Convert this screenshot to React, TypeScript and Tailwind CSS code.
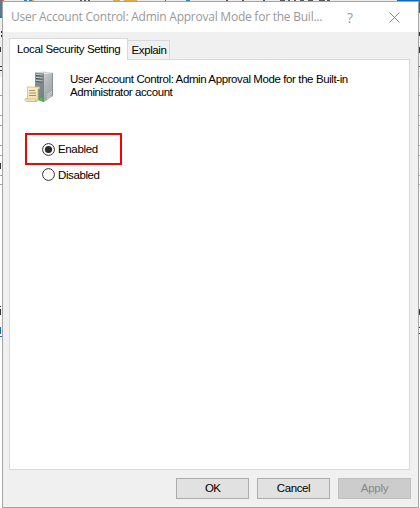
import React from "react";

function Backdrop() {
  return (
    <svg className="absolute inset-0" width="420" height="508" shapeRendering="crispEdges">
      <rect width="420" height="508" fill="#fff" />
      <rect width="420" height="2" fill="#ececec" />
      <rect width="2" height="18" fill="#5e7891" />
      <rect x="2" width="2" height="1" fill="#e2552c" />
      <rect y="16" width="2" height="2" fill="#2f73b8" />
      <g fill="#2f7ec6">
        <rect x="24" width="3" height="1" />
        <rect x="29" width="3" height="1" />
        <rect x="186" width="4" height="1" />
        <rect x="397" width="23" height="13" fill="#0a6cc0" />
      </g>
      <g fill="#e0a850">
        <rect x="113" width="7" height="1" />
        <rect x="124" width="13" height="1" />
        <rect x="32" width="2" height="1" />
      </g>
      <g fill="#555">
        <rect x="80" width="2" height="1" />
        <rect x="84" width="2" height="1" />
        <rect x="88" width="2" height="1" />
        <rect x="165" width="1" height="1" />
        <rect x="226" width="2" height="1" />
        <rect x="242" width="2" height="1" />
        <rect x="263" width="2" height="1" />
        <rect x="280" width="5" height="1" />
        <rect x="288" width="2" height="1" />
        <rect x="294" width="2" height="1" />
        <rect x="300" width="4" height="1" />
        <rect x="308" width="5" height="1" />
        <rect x="319" width="6" height="1" />
        <rect x="327" width="3" height="1" />
      </g>
      {[95, 115, 125, 145, 155, 175, 184].map((y) => (
        <rect key={y} y={y} width="420" height="1" fill="#a5a5a5" />
      ))}
      <rect y="19" width="2" height="58" fill="#eee" />
      <rect x="419" y="13" width="1" height="64" fill="#eee" />
      <g fill="#333">
        <rect y="31" x="1" width="1" height="2" />
        <rect y="35" x="1" width="1" height="2" />
        <rect y="47" width="1" height="5" />
        <rect y="66" width="2" height="1" />
        <rect y="70" width="2" height="1" />
        <rect y="163" width="1" height="6" />
        <rect y="306" width="1" height="1" />
        <rect y="309" width="1" height="6" />
        <rect x="419" y="32" width="1" height="4" />
        <rect x="419" y="47" width="1" height="6" />
        <rect x="419" y="66" width="1" height="1" />
        <rect x="419" y="309" width="1" height="6" />
        <rect x="419" y="327" width="1" height="1" />
        <rect x="419" y="333" width="1" height="1" />
      </g>
      <rect y="327" width="1" height="7" fill="#1769bd" />
      <rect y="336" width="2" height="1" fill="#1769bd" />
    </svg>
  );
}

function ServerIcon() {
  return (
    <svg width="30" height="32" viewBox="0 0 30 32" className="block shrink-0">
      <defs>
        <linearGradient id="front" x1="0" x2="1" y1="0" y2="1">
          <stop offset="0" stopColor="#8a959b" />
          <stop offset="1" stopColor="#747f84" />
        </linearGradient>
        <linearGradient id="side" x1="0" x2="1" y1="0" y2="1">
          <stop offset="0" stopColor="#e3e7e8" />
          <stop offset=".5" stopColor="#b4bbbd" />
          <stop offset="1" stopColor="#919b9e" />
        </linearGradient>
        <linearGradient id="paper" x1="0" x2="1" y1="0" y2="1">
          <stop offset="0" stopColor="#fff8dc" />
          <stop offset="1" stopColor="#ecd9a0" />
        </linearGradient>
      </defs>
      <path d="M11 1.5 18.5.5 29 1.5V25L20 31 11 28Z" fill="url(#side)" />
      <path d="M11 1.5 20 2.5V31L11 28Z" fill="url(#front)" />
      <path d="M20 2.5 29 1.5" stroke="#eef2f2" />
      <path d="M12 4.5 18.5 5M12 7.5 18.5 8M12 10.5 18.5 11" stroke="#3e484d" strokeWidth="1.2" />
      <path d="M12 3.5 18.5 4M12 6.5 18.5 7M12 9.5 18.5 10" stroke="#d7dddd" strokeWidth=".8" />
      <path d="m23 24 5-3.5M23 26l5-3.5M23 28l4-3" stroke="#dce1e1" strokeWidth=".8" />
      <path d="M28.5 2V24" stroke="#7e898c" strokeWidth=".8" />
      <path d="M3 16h12.5v1.5L14 18v11.5q-1 1-2 .9H2q-1.6-.8-1-2.7h2.5V18Z" fill="url(#paper)" stroke="#d0b780" strokeWidth=".8" />
      <path d="M1 28h10q1 .7 1 2.2H2" fill="#faefc9" stroke="#c5a96f" strokeWidth=".7" />
      <path d="M5 19.5h6M5 22h7M5 24.5h7" stroke="#a08752" strokeWidth=".9" />
      <rect x="16" y="27" width="2.6" height="2.5" fill="#39d51f" />
    </svg>
  );
}

function Radio({ label, checked }: { label: string; checked?: boolean }) {
  return (
    <div role="radio" aria-checked={!!checked} className="flex h-[25px] items-center">
      <svg width="13" height="13" className="mr-[3px] shrink-0">
        <circle cx="6.5" cy="6.5" r="5.9" fill="#fff" stroke="#333" strokeWidth="1" />
        {checked && <circle cx="6.5" cy="6.5" r="3.6" fill="#2b2b2b" />}
      </svg>
      <span className="whitespace-nowrap leading-4">{label}</span>
    </div>
  );
}

const button = "flex h-[21px] w-[73px] items-center justify-center border";

export default function App() {
  return (
    <div className="relative h-[508px] w-[420px] overflow-hidden font-['Liberation_Sans',Arial,sans-serif] text-[11.5px] text-black">
      <Backdrop />
      <main className="absolute left-[2px] top-px flex h-[507px] w-[417px] flex-col border border-[#a5a5a5] bg-[#f0f0f0]">
        <header className="flex h-[30px] shrink-0 items-center bg-white pl-[8px] font-['Open_Sans','Noto_Sans',sans-serif] text-[12px] text-[#999]">
          <h1 className="w-[326px] whitespace-nowrap tracking-[-0.24px]">User Account Control: Admin Approval Mode for the Buil...</h1>
          <span className="ml-[8px] w-[10px] text-center text-[14px]">?</span>
          <svg width="11" height="11" className="ml-[34px]">
            <path d="m.5.5 10 10m0-10-10 10" stroke="#888" />
          </svg>
        </header>
        <nav className="mt-[6px] flex h-[21px] shrink-0 items-end pl-[6px]">
          <div className="relative z-10 -mb-px flex h-[22px] w-[119px] items-center border border-b-0 border-[#d9d9d9] bg-white pl-[7px]">
            <span className="whitespace-nowrap tracking-[-0.36px]">Local Security Setting</span>
          </div>
          <div className="flex h-[19px] w-[42px] items-center justify-center border border-b-0 border-l-0 border-[#d9d9d9] pl-px pt-[2px]">
            <span className="tracking-[-0.4px]">Explain</span>
          </div>
        </nav>
        <section className="ml-[6px] flex h-[411px] w-[401px] shrink-0 flex-col border border-[#d9d9d9] bg-white">
          <div className="flex pl-[14px] pt-[11px]">
            <ServerIcon />
            <p className="ml-[16px] mt-[2px] whitespace-nowrap leading-[13px]">
              <span className="block tracking-[-0.4px]">User Account Control: Admin Approval Mode for the Built-in</span>
              <span className="block tracking-[-0.42px]">Administrator account</span>
            </p>
          </div>
          <div className="ml-[15px] mt-[30px] flex h-[32px] w-[97px] items-center border-2 border-[#ff0000] pl-[15px] tracking-[-0.35px]">
            <Radio label="Enabled" checked />
          </div>
          <div className="-mt-[3px] pl-[32px] tracking-[-0.4px]">
            <Radio label="Disabled" />
          </div>
        </section>
        <footer className="mt-[8px] flex gap-[8px] pl-[173px]">
          <button className={`${button} border-[#adadad] bg-[#e1e1e1] pt-px`}><span className="tracking-[-0.8px]">OK</span></button>
          <button className={`${button} border-[#adadad] bg-[#e1e1e1] pt-px`}><span className="tracking-[-0.4px]">Cancel</span></button>
          <button disabled className={`${button} border-[#bfbfbf] bg-[#ccc] pt-px text-[#888]`}><span className="tracking-[-0.3px]">Apply</span></button>
        </footer>
      </main>
    </div>
  );
}
